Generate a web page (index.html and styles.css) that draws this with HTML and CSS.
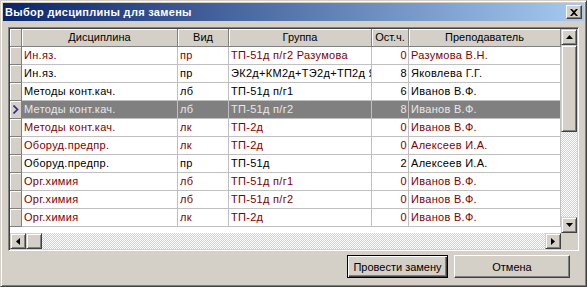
FILE: index.html
```html
<!DOCTYPE html>
<html lang="ru">
<head>
    <meta charset="UTF-8">
    <title>Выбор дисциплины для замены</title>
    <link rel="stylesheet" href="styles.css">
</head>
<body>

<div class="window">
    <div class="titlebar">
        <span class="title">Выбор дисциплины для замены</span>
        <button class="close">
            <svg width="8" height="7" viewBox="0 0 8 7"><path d="M0 0h2l2 2 2-2h2L5 3.5 8 7H6L4 5 2 7H0l3-3.5z" fill="#000"/></svg>
        </button>
    </div>

    <div class="content">
        <div class="grid">
            <div class="grid-view">
                <div class="row head">
                    <div class="cell ind"></div>
                    <div class="cell">Дисциплина</div>
                    <div class="cell">Вид</div>
                    <div class="cell">Группа</div>
                    <div class="cell">Ост.ч.</div>
                    <div class="cell">Преподаватель</div>
                </div>
                <div class="row red">
                    <div class="cell ind"></div>
                    <div class="cell">Ин.яз.</div>
                    <div class="cell">пр</div>
                    <div class="cell">ТП-51д п/г2 Разумова</div>
                    <div class="cell num">0</div>
                    <div class="cell">Разумова В.Н.</div>
                </div>
                <div class="row">
                    <div class="cell ind"></div>
                    <div class="cell">Ин.яз.</div>
                    <div class="cell">пр</div>
                    <div class="cell">ЭК2д+КМ2д+ТЭ2д+ТП2д Я</div>
                    <div class="cell num">8</div>
                    <div class="cell">Яковлева Г.Г.</div>
                </div>
                <div class="row">
                    <div class="cell ind"></div>
                    <div class="cell">Методы конт.кач.</div>
                    <div class="cell">лб</div>
                    <div class="cell">ТП-51д п/г1</div>
                    <div class="cell num">6</div>
                    <div class="cell">Иванов В.Ф.</div>
                </div>
                <div class="row selected">
                    <div class="cell ind">
                        <svg width="6" height="9" viewBox="0 0 6 9"><path d="M0.5 0.5l4 4-4 4" fill="none" stroke="#2a2a8a" stroke-width="1.6"/></svg>
                    </div>
                    <div class="cell">Методы конт.кач.</div>
                    <div class="cell">лб</div>
                    <div class="cell">ТП-51д п/г2</div>
                    <div class="cell num">8</div>
                    <div class="cell">Иванов В.Ф.</div>
                </div>
                <div class="row red">
                    <div class="cell ind"></div>
                    <div class="cell">Методы конт.кач.</div>
                    <div class="cell">лк</div>
                    <div class="cell">ТП-2д</div>
                    <div class="cell num">0</div>
                    <div class="cell">Иванов В.Ф.</div>
                </div>
                <div class="row red">
                    <div class="cell ind"></div>
                    <div class="cell">Оборуд.предпр.</div>
                    <div class="cell">лк</div>
                    <div class="cell">ТП-2д</div>
                    <div class="cell num">0</div>
                    <div class="cell">Алексеев И.А.</div>
                </div>
                <div class="row">
                    <div class="cell ind"></div>
                    <div class="cell">Оборуд.предпр.</div>
                    <div class="cell">пр</div>
                    <div class="cell">ТП-51д</div>
                    <div class="cell num">2</div>
                    <div class="cell">Алексеев И.А.</div>
                </div>
                <div class="row red">
                    <div class="cell ind"></div>
                    <div class="cell">Орг.химия</div>
                    <div class="cell">лб</div>
                    <div class="cell">ТП-51д п/г1</div>
                    <div class="cell num">0</div>
                    <div class="cell">Иванов В.Ф.</div>
                </div>
                <div class="row red">
                    <div class="cell ind"></div>
                    <div class="cell">Орг.химия</div>
                    <div class="cell">лб</div>
                    <div class="cell">ТП-51д п/г2</div>
                    <div class="cell num">0</div>
                    <div class="cell">Иванов В.Ф.</div>
                </div>
                <div class="row red">
                    <div class="cell ind"></div>
                    <div class="cell">Орг.химия</div>
                    <div class="cell">лк</div>
                    <div class="cell">ТП-2д</div>
                    <div class="cell num">0</div>
                    <div class="cell">Иванов В.Ф.</div>
                </div>
            </div>

            <!-- вертикальная прокрутка -->
            <div class="vscroll">
                <div class="sbtn"><svg width="7" height="4" viewBox="0 0 7 4"><path d="M3.5 0L7 4H0z"/></svg></div>
                <div class="thumb vthumb"></div>
                <div class="track"></div>
                <div class="sbtn"><svg width="7" height="4" viewBox="0 0 7 4"><path d="M0 0h7L3.5 4z"/></svg></div>
            </div>

            <!-- горизонтальная прокрутка -->
            <div class="hscroll">
                <div class="sbtn"><svg width="4" height="7" viewBox="0 0 4 7"><path d="M0 3.5L4 0v7z"/></svg></div>
                <div class="thumb hthumb"></div>
                <div class="track"></div>
                <div class="sbtn"><svg width="4" height="7" viewBox="0 0 4 7"><path d="M0 0l4 3.5L0 7z"/></svg></div>
            </div>
            <div class="corner"></div>
        </div>

        <div class="actions">
            <button class="btn default wide">Провести замену</button>
            <button class="btn cancel">Отмена</button>
        </div>
    </div>
</div>

</body>
</html>
```

FILE: styles.css
```css
body {
    margin: 0;
    font-family: "Liberation Sans", Arial, sans-serif;
    font-size: 11px;
    color: #000;
    background: #d4d0c8;
}

.window {
    width: 587px;
    height: 287px;
    box-sizing: border-box;
    display: flex;
    flex-direction: column;
    padding: 2px;
    background: #d4d0c8;
    border: 1px solid;
    border-color: #d4d0c8 #404040 #404040 #d4d0c8;
    box-shadow: inset 1px 1px #fff, inset -1px -1px #808080;
}

.titlebar {
    height: 18px;
    display: flex;
    align-items: center;
    justify-content: space-between;
    padding: 0 2px 0 2px;
    background: linear-gradient(to right, #0a246a, #a6caf0);
}

.title {
    color: #fff;
    font-weight: bold;
    font-size: 11px;
    letter-spacing: 0.3px;
}

.close {
    width: 16px;
    height: 14px;
    padding: 0;
    display: flex;
    align-items: center;
    justify-content: center;
    background: #d4d0c8;
    border: 1px solid;
    border-color: #fff #404040 #404040 #fff;
    box-shadow: inset -1px -1px #808080;
}

.content {
    flex: 1;
    display: flex;
    flex-direction: column;
    padding: 6px 5px 0 5px;
}

/* таблица с прокруткой */
.grid {
    display: grid;
    grid-template-columns: 551px 16px;
    grid-template-rows: 204px 16px;
    border: 1px solid;
    border-color: #808080 #fff #fff #808080;
    box-shadow: inset 1px 1px #404040, inset -1px -1px #d4d0c8;
    padding: 1px;
}

.grid-view {
    background: #fff;
    overflow: hidden;
}

.row {
    display: grid;
    grid-template-columns: 12px 156px 51px 143px 37px 1fr;
    height: 18px;
}

.cell {
    box-sizing: border-box;
    height: 18px;
    line-height: 17px;
    padding: 0 2px;
    letter-spacing: 0.3px;
    white-space: nowrap;
    overflow: hidden;
    border-right: 1px solid #c0c0c0;
    border-bottom: 1px solid #c0c0c0;
}

.cell.num {
    text-align: right;
    padding-right: 1px;
}

.cell.ind {
    padding: 0;
    display: flex;
    align-items: center;
    justify-content: center;
    background: #d4d0c8;
    border-right: 1px solid #808080;
    border-bottom: 1px solid #808080;
    box-shadow: inset 1px 1px #fff;
}

.head .cell {
    background: #d4d0c8;
    text-align: center;
    letter-spacing: 0;
    border-right: 1px solid #808080;
    border-bottom: 1px solid #808080;
    box-shadow: inset 1px 1px #fff;
}

.red {
    color: #800000;
}

.selected .cell {
    background: #808080;
    color: #e8e8e8;
}

.selected .cell.ind {
    background: #d4d0c8;
}

.vscroll {
    display: flex;
    flex-direction: column;
}

.hscroll {
    display: flex;
}

.sbtn,
.thumb {
    box-sizing: border-box;
    width: 16px;
    height: 16px;
    display: flex;
    align-items: center;
    justify-content: center;
    background: #d4d0c8;
    border: 1px solid;
    border-color: #d4d0c8 #404040 #404040 #d4d0c8;
    box-shadow: inset 1px 1px #fff, inset -1px -1px #808080;
}

.vthumb {
    height: 87px;
}

.track {
    flex: 1;
    background-image: conic-gradient(#fff 25%, #d4d0c8 0 50%, #fff 0 75%, #d4d0c8 0);
    background-size: 2px 2px;
}

.corner {
    background: #d4d0c8;
}

.actions {
    display: flex;
    justify-content: flex-end;
    gap: 6px;
    padding: 4px 9px 0 0;
}

.btn {
    box-sizing: border-box;
    height: 23px;
    padding: 0;
    font-family: "Liberation Sans", Arial, sans-serif;
    font-size: 11px;
    color: #000;
    background: #d4d0c8;
    border: 1px solid;
    border-color: #fff #404040 #404040 #fff;
    box-shadow: inset -1px -1px #808080;
}

.btn.default {
    border-color: #000;
    box-shadow: inset 1px 1px #fff, inset -1px -1px #404040, inset -2px -2px #808080;
}

.wide {
    width: 101px;
}

.cancel {
    width: 116px;
}
```
